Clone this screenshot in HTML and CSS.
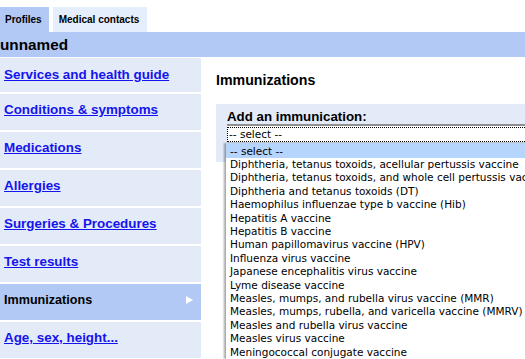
FILE: index.html
```html
<!DOCTYPE html>
<html lang="en">

<head>
    <meta charset="UTF-8">
    <meta name="viewport" content="width=device-width, initial-scale=1.0">
    <title>Health Profile - Immunizations</title>
    <link rel="stylesheet" href="styles.css">
</head>

<body>
    <!-- Top tabs -->
    <div class="tabs">
        <span class="tab tab-active">Profiles</span>
        <span class="tab">Medical contacts</span>
    </div>

    <!-- Profile name bar -->
    <div class="profile-bar">unnamed</div>

    <div class="layout">
        <!-- Left navigation -->
        <ul class="side-nav">
            <li class="first"><a href="#">Services and health guide</a></li>
            <li><a href="#">Conditions &amp; symptoms</a></li>
            <li><a href="#">Medications</a></li>
            <li><a href="#">Allergies</a></li>
            <li><a href="#">Surgeries &amp; Procedures</a></li>
            <li><a href="#">Test results</a></li>
            <li class="current">
                <span>Immunizations</span>
                <svg class="arrow" width="7" height="8" viewBox="0 0 7 8"><path d="M0 0 L7 4 L0 8 Z" fill="#fff"/></svg>
            </li>
            <li><a href="#">Age, sex, height...</a></li>
        </ul>

        <!-- Main content -->
        <div class="content">
            <h2>Immunizations</h2>
            <div class="add-panel">
                <label for="immunization">Add an immunication:</label>
                <div class="picker" id="immunization">
                    <div class="picker-value"><div class="picker-focus">-- select --</div></div>
                    <ul class="picker-list">
                        <li class="selected">-- select --</li>
                        <li>Diphtheria, tetanus toxoids, acellular pertussis vaccine</li>
                        <li>Diphtheria, tetanus toxoids, and whole cell pertussis vaccine</li>
                        <li>Diphtheria and tetanus toxoids (DT)</li>
                        <li>Haemophilus influenzae type b vaccine (Hib)</li>
                        <li>Hepatitis A vaccine</li>
                        <li>Hepatitis B vaccine</li>
                        <li>Human papillomavirus vaccine (HPV)</li>
                        <li>Influenza virus vaccine</li>
                        <li>Japanese encephalitis virus vaccine</li>
                        <li>Lyme disease vaccine</li>
                        <li>Measles, mumps, and rubella virus vaccine (MMR)</li>
                        <li>Measles, mumps, rubella, and varicella vaccine (MMRV)</li>
                        <li>Measles and rubella virus vaccine</li>
                        <li>Measles virus vaccine</li>
                        <li>Meningococcal conjugate vaccine</li>
                    </ul>
                </div>
            </div>
        </div>
    </div>
</body>

</html>
```

FILE: styles.css
```css
body {
    margin: 0;
    font-family: "Liberation Sans", Arial, sans-serif;
    background: #fff;
    color: #000;
    overflow: hidden;
    height: 359px;
}

/* Tabs */
.tabs {
    display: flex;
    gap: 4px;
    padding-top: 7px;
}

.tab {
    height: 25px;
    line-height: 25px;
    padding: 0 7px 0 5px;
    font-size: 10px;
    font-weight: bold;
    background: #e5eefc;
}

.tab + .tab {
    padding: 0 8px 0 6px;
}

.tab-active {
    background: #b3c9f5;
}

/* Profile bar */
.profile-bar {
    height: 25px;
    line-height: 25px;
    font-size: 15.3px;
    font-weight: bold;
    background: #b3c9f5;
    margin-bottom: 1px;
}

.layout {
    display: flex;
}

/* Left navigation */
.side-nav {
    list-style: none;
    margin: 0;
    padding: 0;
    width: 201px;
    flex-shrink: 0;
    display: flex;
    flex-direction: column;
    gap: 2px;
}

.side-nav li {
    box-sizing: border-box;
    height: 36px;
    display: flex;
    align-items: flex-start;
    padding: 8px 0 0 4px;
    line-height: 16px;
    background: #e3eaf8;
    font-size: 13.4px;
    font-weight: bold;
}

.side-nav li.first {
    height: 34px;
    padding-top: 9px;
}

.side-nav a {
    color: #1414ee;
}

.side-nav li.current {
    background: #b3c9f5;
    justify-content: space-between;
    padding-right: 8px;
    font-size: 12.6px;
}

.side-nav .arrow {
    display: block;
    margin-top: 4px;
}

/* Content */
.content {
    flex: 1;
    padding: 14px 0 0 15px;
}

.content h2 {
    margin: 0 0 16px;
    font-size: 14.2px;
    line-height: 16px;
}

.add-panel {
    background: #e3eaf8;
    padding: 5px 0 19px 11px;
}

.add-panel label {
    display: block;
    font-size: 13.3px;
    font-weight: bold;
    line-height: 15px;
}

/* Dropdown */
.picker {
    position: relative;
    margin-right: -30px;
    font-family: "DejaVu Sans", Verdana, sans-serif;
    font-size: 10.5px;
}

.picker-value {
    background: #fff;
    border-top: 2px solid #8e8e8e;
    border-bottom: 1px solid #dcdcdc;
    padding-top: 1px;
}

.picker-focus {
    border: 1px dotted #000;
    border-right: none;
    height: 13px;
    line-height: 13px;
    padding-left: 1px;
}

.picker-list {
    position: absolute;
    top: 100%;
    left: -1px;
    width: 330px;
    margin: 0;
    padding: 0;
    list-style: none;
    background: #fff;
    box-shadow: -2px 0 2px rgba(0, 0, 0, 0.35);
}

.picker-list li {
    line-height: 13.4px;
    padding-left: 4px;
    white-space: nowrap;
}

.picker-list li.selected {
    background: #b5d5fd;
    padding-top: 1.5px;
    padding-bottom: 0.1px;
}
```
